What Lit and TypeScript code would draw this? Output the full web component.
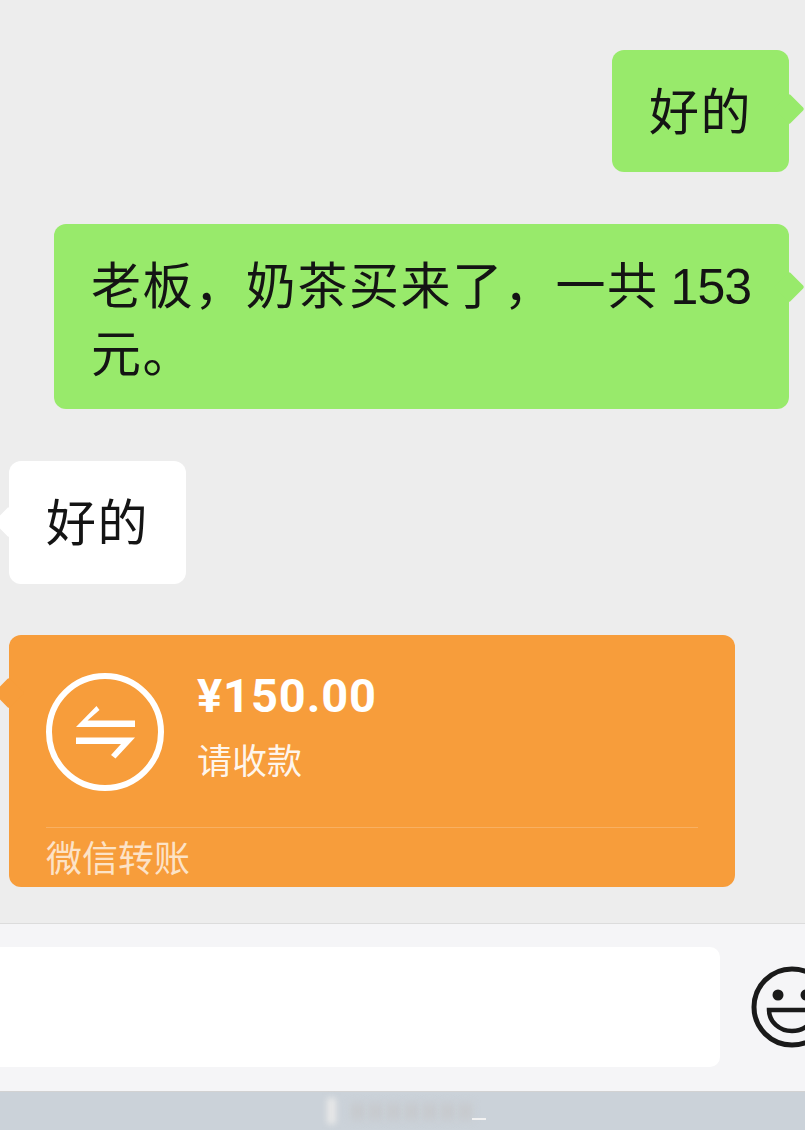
import { LitElement, html, css } from "lit";
import { customElement } from "lit/decorators.js";

@customElement("app-root")
export class AppRoot extends LitElement {
  static styles = css`
    :host {
      display: flex;
      flex-direction: column;
      width: 805px;
      height: 1130px;
      overflow: hidden;
      background: #ededed;
      font-family: "Noto Sans CJK SC", "Liberation Sans", sans-serif;
      color: #141414;
    }
    .chat {
      flex: 1;
      min-height: 0;
      display: flex;
      flex-direction: column;
      padding: 50px 16px 0 9px;
    }
    .bubble {
      position: relative;
      box-sizing: border-box;
      border-radius: 12px;
      font-size: 50px;
      line-height: 65px;
      padding: 26px 37px;
    }
    .bubble::after {
      content: "";
      position: absolute;
      top: 48px;
      width: 22px;
      height: 22px;
      background: inherit;
      transform: rotate(45deg);
      border-radius: 2px;
    }
    .out {
      align-self: flex-end;
      background: #98ea6b;
    }
    .out::after {
      right: -11px;
    }
    .in {
      align-self: flex-start;
      background: #fff;
    }
    .in::after {
      left: -11px;
    }
    .short {
      width: 177px;
      height: 122px;
      letter-spacing: 1.5px;
      white-space: nowrap;
    }
    .long {
      width: 735px;
      height: 185px;
      margin-top: 52px;
      letter-spacing: 1.6px;
      line-height: 63px;
      padding: 27px 20px 27px 37px;
    }
    .long::after {
      top: 52px;
    }
    .num {
      font-family: "Liberation Sans", sans-serif;
      letter-spacing: -1px;
      margin-left: 12px;
    }
    .gap1 {
      margin-top: 52px;
      height: 123px;
    }
    .gap1::after {
      top: 50px;
    }
    .transfer {
      margin-top: 51px;
      width: 726px;
      height: 252px;
      background: #f79d3b;
      color: #fff;
      padding: 38px 37px 0;
      display: flex;
      flex-direction: column;
      line-height: normal;
    }
    .transfer::after {
      top: 47px;
    }
    .row {
      display: flex;
      gap: 33px;
      height: 154px;
      flex: none;
    }
    .ring {
      width: 118px;
      height: 118px;
      flex: none;
    }
    .info {
      display: flex;
      flex-direction: column;
    }
    .amount {
      font-family: "Roboto", "Liberation Sans", sans-serif;
      font-weight: 700;
      font-size: 47px;
      line-height: 48px;
      letter-spacing: 0.9px;
      margin-top: -1px;
    }
    .label {
      font-size: 35px;
      line-height: 50px;
      margin-top: 14px;
      color: rgba(255, 255, 255, 0.92);
    }
    .foot {
      border-top: 1px solid rgba(255, 255, 255, 0.2);
      font-size: 36px;
      line-height: 57px;
      color: rgba(255, 255, 255, 0.72);
    }
    .bar {
      flex: none;
      height: 168px;
      box-sizing: border-box;
      background: #f5f5f7;
      border-top: 1px solid #dcdcdc;
      display: flex;
      align-items: flex-start;
      padding-top: 23px;
    }
    .input {
      flex: none;
      width: 720px;
      height: 120px;
      background: #fff;
      border-radius: 0 10px 10px 0;
    }
    .smile {
      flex: none;
      width: 84px;
      height: 84px;
      margin: 18px 0 0 30px;
    }
    .home {
      flex: none;
      height: 39px;
      background: #cbd2d9;
      border-top: 1px solid #d2d2d2;
      box-sizing: border-box;
      display: flex;
      justify-content: center;
      align-items: center;
      gap: 7px;
      padding-left: 8px;
    }
    .wm {
      height: 17px;
      width: 11px;
      background: #c6c8cb;
      filter: blur(4px);
    }
    .wm.lead {
      width: 9px;
      height: 26px;
      background: #e8e8e8;
      filter: blur(3px);
      margin-right: 9px;
    }
    .wm.tail {
      height: 2px;
      width: 14px;
      background: #f2f2f2;
      filter: blur(0.7px);
      align-self: flex-end;
      margin-bottom: 10px;
      margin-left: -6px;
    }
  `;

  render() {
    return html`
      <div class="chat">
        <div class="bubble out short">好的</div>
        <div class="bubble out long">老板，奶茶买来了，一共<span class="num">153</span> 元。</div>
        <div class="bubble in short gap1">好的</div>
        <div class="bubble in transfer">
          <div class="row">
            <svg class="ring" viewBox="0 0 118 118">
              <circle cx="59" cy="59" r="56" fill="none" stroke="#fff" stroke-width="6"></circle>
              <polygon fill="#fff" points="30,54 50.5,33 53.5,37 41.5,47.5 89,47.5 89,54"></polygon>
              <polygon fill="#fff" points="30,64.5 89,64.5 69.5,85.5 65,82 75,71 30,71"></polygon>
            </svg>
            <div class="info">
              <div class="amount">¥150.00</div>
              <div class="label">请收款</div>
            </div>
          </div>
          <div class="foot">微信转账</div>
        </div>
      </div>
      <div class="bar">
        <div class="input"></div>
        <svg class="smile" viewBox="0 0 84 84" fill="none" stroke="#1a1a1a">
          <circle cx="42" cy="42" r="38" stroke-width="5"></circle>
          <circle cx="28" cy="30" r="5.5" fill="#1a1a1a" stroke="none"></circle>
          <circle cx="56" cy="30" r="5.5" fill="#1a1a1a" stroke="none"></circle>
          <path d="M19 45H65A23 21 0 0 1 19 45Z" stroke-width="4.5"></path>
        </svg>
      </div>
      <div class="home">
        <span class="wm lead"></span>
        <span class="wm"></span>
        <span class="wm"></span>
        <span class="wm"></span>
        <span class="wm"></span>
        <span class="wm"></span>
        <span class="wm"></span>
        <span class="wm"></span>
        <span class="wm tail"></span>
      </div>
    `;
  }
}
